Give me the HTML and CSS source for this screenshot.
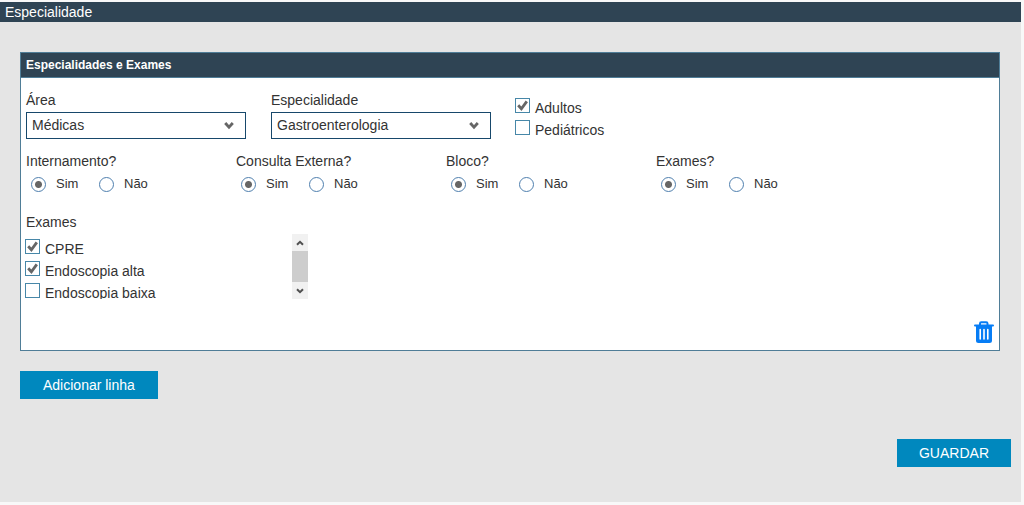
FILE: index.html
```html
<!DOCTYPE html>
<html lang="pt">
<head>
<meta charset="utf-8">
<title>Especialidade</title>
<link rel="stylesheet" href="styles.css">
</head>
<body>
<main class="app">
  <h1 class="app-title">Especialidade</h1>
  <form class="content">
    <section class="panel">
      <h2 class="panel-title">Especialidades e Exames</h2>
      <div class="panel-body">
        <div class="fields">
          <div class="field">
            <label class="label" for="area">Área</label>
            <div class="select-box">
              <select class="select" id="area"><option>Médicas</option></select>
              <svg class="chevron" viewBox="0 0 10 8" aria-hidden="true"><path d="M1.2 1 5 5.2 8.8 1"/></svg>
            </div>
          </div>
          <div class="field">
            <label class="label" for="especialidade">Especialidade</label>
            <div class="select-box">
              <select class="select" id="especialidade"><option>Gastroenterologia</option></select>
              <svg class="chevron" viewBox="0 0 10 8" aria-hidden="true"><path d="M1.2 1 5 5.2 8.8 1"/></svg>
            </div>
          </div>
          <div class="ages">
            <label class="check"><span class="tick-box"><input type="checkbox" checked><svg viewBox="0 0 15 15" aria-hidden="true"><path d="M3.2 7.2 6.4 10.8 11.8 3.4"/></svg></span>Adultos</label>
            <label class="check"><span class="tick-box"><input type="checkbox"><svg viewBox="0 0 15 15" aria-hidden="true"><path d="M3.2 7.2 6.4 10.8 11.8 3.4"/></svg></span>Pediátricos</label>
          </div>
        </div>
        <div class="questions">
          <fieldset class="question">
            <legend class="label">Internamento?</legend>
            <div class="options">
              <label class="option"><input type="radio" name="internamento" checked>Sim</label>
              <label class="option"><input type="radio" name="internamento">Não</label>
            </div>
          </fieldset>
          <fieldset class="question">
            <legend class="label">Consulta Externa?</legend>
            <div class="options">
              <label class="option"><input type="radio" name="consulta" checked>Sim</label>
              <label class="option"><input type="radio" name="consulta">Não</label>
            </div>
          </fieldset>
          <fieldset class="question">
            <legend class="label">Bloco?</legend>
            <div class="options">
              <label class="option"><input type="radio" name="bloco" checked>Sim</label>
              <label class="option"><input type="radio" name="bloco">Não</label>
            </div>
          </fieldset>
          <fieldset class="question">
            <legend class="label">Exames?</legend>
            <div class="options">
              <label class="option"><input type="radio" name="exames" checked>Sim</label>
              <label class="option"><input type="radio" name="exames">Não</label>
            </div>
          </fieldset>
        </div>
        <fieldset class="exams">
          <legend class="label">Exames</legend>
          <div class="exam-list">
            <div class="exam-items">
              <label class="check"><span class="tick-box"><input type="checkbox" checked><svg viewBox="0 0 15 15" aria-hidden="true"><path d="M3.2 7.2 6.4 10.8 11.8 3.4"/></svg></span>CPRE</label>
              <label class="check"><span class="tick-box"><input type="checkbox" checked><svg viewBox="0 0 15 15" aria-hidden="true"><path d="M3.2 7.2 6.4 10.8 11.8 3.4"/></svg></span>Endoscopia alta</label>
              <label class="check"><span class="tick-box"><input type="checkbox"><svg viewBox="0 0 15 15" aria-hidden="true"><path d="M3.2 7.2 6.4 10.8 11.8 3.4"/></svg></span>Endoscopia baixa</label>
            </div>
            <div class="scrollbar">
              <button class="scroll-button" type="button" aria-label="Subir"><svg viewBox="0 0 8 6"><path d="M1 4.8 4 1.8 7 4.8"/></svg></button>
              <div class="scroll-thumb"></div>
              <button class="scroll-button" type="button" aria-label="Descer"><svg viewBox="0 0 8 6"><path d="M1 1.2 4 4.2 7 1.2"/></svg></button>
            </div>
          </div>
        </fieldset>
        <div class="panel-actions">
          <button class="delete" type="button" aria-label="Eliminar linha">
            <svg viewBox="0 0 20 22" aria-hidden="true">
              <path class="trash-lid" d="M6 4V2.5Q6 1.2 7.3 1.2H12.2Q13.5 1.2 13.5 2.5V4"/>
              <path class="trash-fill" d="M1 3.6H19Q20 3.6 20 4.6T19 5.6H18V19.5Q18 22 15.5 22H4.5Q2 22 2 19.5V5.6H1Q0 5.6 0 4.6T1 3.6Z"/>
              <path class="trash-lines" d="M6.2 8.5V18M10 8.5V18M13.8 8.5V18"/>
            </svg>
          </button>
        </div>
      </div>
    </section>
    <button class="button" type="button">Adicionar linha</button>
    <div class="footer"><button class="button" type="submit">GUARDAR</button></div>
  </form>
</main>
</body>
</html>
```

FILE: styles.css
```css
* { box-sizing: border-box; }

body {
  margin: 0;
  padding: 2px 3px 3px 0;
  background: #f8f8f8;
  color: #333;
  font: 14px/20px "Liberation Sans", Arial, sans-serif;
}

button, select, input { margin: 0; font: inherit; color: inherit; }
button { padding: 0; border: 0; background: none; cursor: pointer; }
fieldset { min-width: 0; margin: 0; padding: 0; border: 0; }
legend { padding: 0; }

.app { background: #e5e5e5; }

.app-title {
  margin: 0;
  padding: 0 5px;
  background: #2f4454;
  color: #fff;
  font-size: 14px;
  font-weight: normal;
}

.content { padding: 30px 21px 35px 20px; }

.panel {
  margin-bottom: 20px;
  border: 1px solid #4f7d97;
  background: #fff;
}

.panel-title {
  margin: 0;
  padding: 0 5px;
  border-bottom: 1px solid #4f7d97;
  background: #2f4454;
  color: #fff;
  font-size: 12px;
  line-height: 24px;
}

.panel-body { padding: 12px 5px 7px; }

.label { display: block; }

.fields { display: flex; gap: 25px; }
.field { width: 220px; }

.select-box { display: grid; align-items: center; margin-top: 2px; }
.select-box > * { grid-area: 1 / 1; }

.select {
  width: 100%;
  height: 27px;
  padding: 0 5px 2px;
  border: 1px solid #17486b;
  border-radius: 0;
  background: #fff;
  appearance: none;
}

.chevron {
  justify-self: end;
  width: 10px;
  height: 8px;
  margin-right: 12px;
  pointer-events: none;
}
.chevron path { fill: none; stroke: #666; stroke-width: 2.8; }

.ages { padding-top: 8px; margin-left: -1px; }

.check {
  display: flex;
  align-items: flex-start;
  gap: 5px;
  height: 22px;
}

.tick-box { display: grid; width: 15px; height: 15px; }
.tick-box > * { grid-area: 1 / 1; width: 15px; height: 15px; }
.tick-box input {
  appearance: none;
  border: 1px solid #4787a8;
  background: #fff;
}
.tick-box svg { visibility: hidden; pointer-events: none; }
.tick-box input:checked + svg { visibility: visible; }
.tick-box path { fill: none; stroke: #666; stroke-width: 2.8; }

.questions { display: flex; padding-top: 9px; }
.question { width: 210px; }

.options { display: flex; padding: 3px 0 0 5px; }
.option {
  display: flex;
  align-items: center;
  gap: 10px;
  width: 68px;
  font-size: 13px;
}
.option input {
  width: 15px;
  height: 15px;
  border: 1px solid #4f7fae;
  border-radius: 50%;
  background: #fff;
  appearance: none;
}
.option input:checked { background: radial-gradient(circle, #666 3px, #fff 4px); }

.exams { margin-top: 18px; }

.exam-list {
  display: flex;
  justify-content: space-between;
  width: 283px;
  height: 65px;
  margin: 2px 0 0 -1px;
  overflow: hidden;
}
.exam-items { padding-top: 5px; }

.scrollbar {
  display: flex;
  flex-direction: column;
  width: 16px;
  background: #f1f1f1;
}
.scroll-button { display: grid; place-items: center; height: 17px; }
.scroll-button svg { width: 8px; height: 6px; }
.scroll-button path { fill: none; stroke: #505050; stroke-width: 2; }
.scroll-thumb { flex: 1; background: #cdcdcd; }

.panel-actions { display: flex; justify-content: flex-end; padding-top: 22px; }
.delete { display: block; }
.delete svg { display: block; width: 20px; height: 22px; }
.trash-fill { fill: #077df5; }
.trash-lid { fill: none; stroke: #077df5; stroke-width: 2; }
.trash-lines { stroke: #fff; stroke-width: 1.6; stroke-linecap: round; }

.button {
  display: block;
  padding: 4px 23px;
  background: #0088be;
  color: #fff;
}

.footer {
  display: flex;
  justify-content: flex-end;
  margin: 40px -11px 0 0;
}
.footer .button { padding: 4px 22px; }
```
